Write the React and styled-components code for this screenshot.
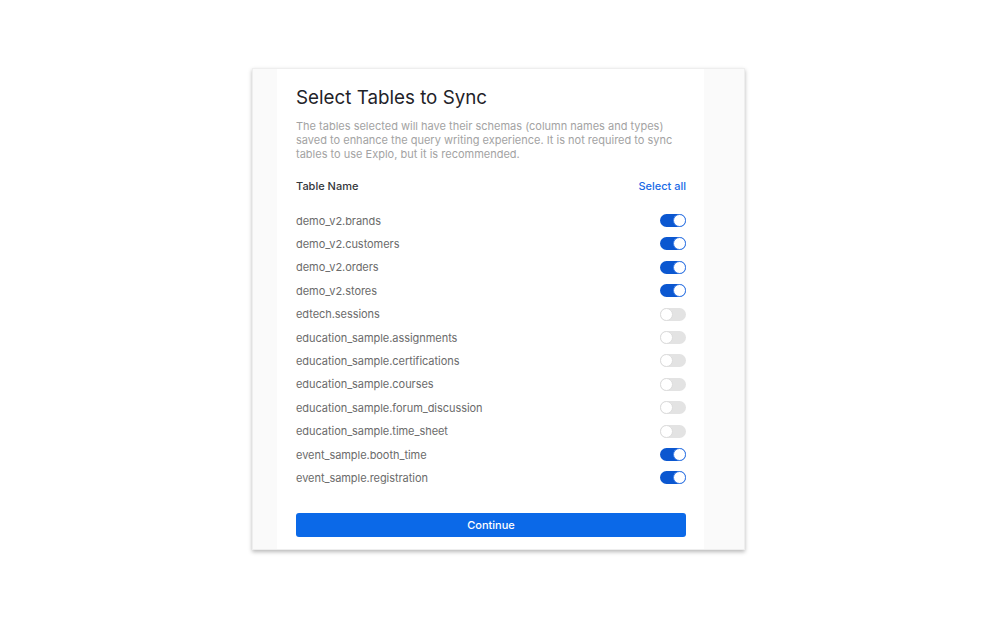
import React, { useState } from 'react'
import styled, { createGlobalStyle } from 'styled-components'

const GlobalStyle = createGlobalStyle`
    html, body {
        margin: 0;
        padding: 0;
        background: #ffffff;
        font-family: Inter, "Noto Sans", "Liberation Sans", sans-serif;
    }
`

const TABLES = [
    ['demo_v2.brands', true],
    ['demo_v2.customers', true],
    ['demo_v2.orders', true],
    ['demo_v2.stores', true],
    ['edtech.sessions', false],
    ['education_sample.assignments', false],
    ['education_sample.certifications', false],
    ['education_sample.courses', false],
    ['education_sample.forum_discussion', false],
    ['education_sample.time_sheet', false],
    ['event_sample.booth_time', true],
    ['event_sample.registration', true],
]

export default function App() {
    const [selected, setSelected] = useState(() => TABLES.map(t => t[1]))

    const toggle = (i) => {
        setSelected(s => s.map((v, j) => (j === i ? !v : v)))
    }

    return (
        <>
            <GlobalStyle />
            <Page>
                <Card>
                    <Panel>
                        <Title>Select Tables to Sync</Title>
                        <Description>
                            The tables selected will have their schemas (column names and types)
                            saved to enhance the query writing experience. It is not required to sync
                            tables to use Explo, but it is recommended.
                        </Description>
                        <Header>
                            <HeaderLabel>Table Name</HeaderLabel>
                            <LinkButton onClick={() => setSelected(TABLES.map(() => true))}>Select all</LinkButton>
                        </Header>
                        <List>
                            {TABLES.map(([name], i) => (
                                <Row key={name}>
                                    <RowName>{name}</RowName>
                                    <Switch $on={selected[i]} onClick={() => toggle(i)} />
                                </Row>
                            ))}
                        </List>
                        <PrimaryButton>Continue</PrimaryButton>
                    </Panel>
                </Card>
            </Page>
        </>
    )
}

const Page = styled.div`
    min-height: 100vh;
    display: flex;
    align-items: center;
    justify-content: center;
`

const Card = styled.div`
    width: 493px;
    background: #fafafa;
    border: 1px solid #eeeeee;
    box-sizing: border-box;
    box-shadow: 0 2px 4px rgba(0, 0, 0, 0.28);
    display: flex;
    padding: 0 40px 0 24px;
`

const Panel = styled.div`
    flex: 1;
    background: #ffffff;
    padding: 17px 18px 12px 19px;
    display: flex;
    flex-direction: column;
`

const Title = styled.h1`
    margin: 0;
    font-size: 18.8px;
    line-height: 24px;
    font-weight: 400;
    color: #1f2329;
`

const Description = styled.p`
    margin: 9px 0 0;
    font-size: 11px;
    line-height: 14px;
    color: #a3a3a3;
`

const Header = styled.div`
    margin-top: 17px;
    height: 16px;
    display: flex;
    align-items: center;
    justify-content: space-between;
`

const HeaderLabel = styled.span`
    font-size: 11px;
    font-weight: 500;
    color: #33363b;
`

const LinkButton = styled.button`
    border: none;
    background: none;
    padding: 0;
    font: inherit;
    font-size: 11px;
    font-weight: 500;
    color: #1a6be6;
    cursor: pointer;
`

const List = styled.div`
    margin-top: 14.5px;
    display: flex;
    flex-direction: column;
`

const Row = styled.div`
    height: 23.4px;
    display: flex;
    align-items: center;
    justify-content: space-between;
`

const RowName = styled.span`
    font-size: 11px;
    letter-spacing: -0.05px;
    color: #6b6b6b;
`

const Switch = styled.button`
    position: relative;
    width: 26px;
    height: 13px;
    padding: 0;
    border: none;
    border-radius: 7px;
    background: ${p => (p.$on ? '#0b57d0' : '#e3e3e3')};
    cursor: pointer;

    &::after {
        content: '';
        position: absolute;
        top: 0;
        left: ${p => (p.$on ? '13px' : '0')};
        width: 13px;
        height: 13px;
        box-sizing: border-box;
        border-radius: 50%;
        background: #ffffff;
        border: 1px solid ${p => (p.$on ? '#3f7fe8' : '#dcdcdc')};
    }
`

const PrimaryButton = styled.button`
    margin-top: 23px;
    height: 24px;
    border: none;
    border-radius: 3px;
    background: #0b69e8;
    color: #ffffff;
    font: inherit;
    font-size: 11px;
    font-weight: 500;
    cursor: pointer;
`
